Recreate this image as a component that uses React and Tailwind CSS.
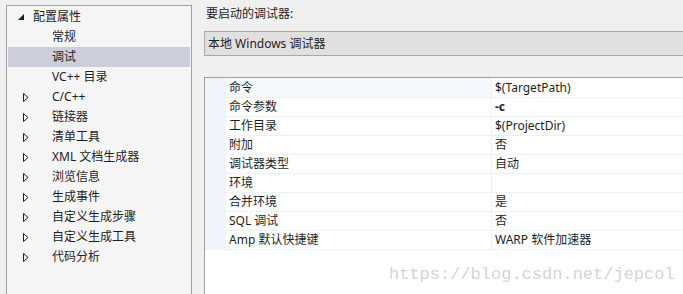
import React from 'react';

const treeItems = [
  { label: '常规' },
  { label: '调试', selected: true },
  { label: 'VC++ 目录' },
  { label: 'C/C++', arrow: true },
  { label: '链接器', arrow: true },
  { label: '清单工具', arrow: true },
  { label: 'XML 文档生成器', arrow: true },
  { label: '浏览信息', arrow: true },
  { label: '生成事件', arrow: true },
  { label: '自定义生成步骤', arrow: true },
  { label: '自定义生成工具', arrow: true },
  { label: '代码分析', arrow: true },
];

const props = [
  ['命令', '$(TargetPath)'],
  ['命令参数', '-c', true],
  ['工作目录', '$(ProjectDir)'],
  ['附加', '否'],
  ['调试器类型', '自动'],
  ['环境', ''],
  ['合并环境', '是'],
  ['SQL 调试', '否'],
  ['Amp 默认快捷键', 'WARP 软件加速器'],
];

const font = { fontFamily: '"Noto Sans", "Noto Sans CJK SC", sans-serif' };

const Collapsed = () => (
  <svg width="6" height="9" viewBox="0 0 6 9" className="mr-[9px]">
    <path d="M0.5 0.5 L5 4.5 L0.5 8.5 Z" fill="none" stroke="#1e1e1e" strokeWidth="1" />
  </svg>
);

const Expanded = () => (
  <svg width="6" height="6" viewBox="0 0 6 6" className="mr-[9px]">
    <path d="M6 0 L6 6 L0 6 Z" fill="#1e1e1e" />
  </svg>
);

export default function App() {
  return (
    <div
      className="w-[683px] h-[294px] overflow-hidden bg-[#f0f0f0] flex pt-[5px] pl-[6px] text-[12px] text-[#1e1e1e]"
      style={font}
    >
      {/* tree */}
      <div className="w-[186px] h-[300px] shrink-0 border border-[#a0a0a0] bg-[#f5f5f5] pt-[1px]">
        <div className="h-[20px] flex items-center pl-[11px]">
          <Expanded />
          <span>配置属性</span>
        </div>
        {treeItems.map((it) => (
          <div
            key={it.label}
            className={`h-[20px] flex items-center mx-[1px] ${it.selected ? 'bg-[#cccedb]' : ''}`}
          >
            <div className="w-[30px] shrink-0 flex justify-end">{it.arrow && <Collapsed />}</div>
            <span className="pl-[14px]">{it.label}</span>
          </div>
        ))}
      </div>

      {/* right side */}
      <div className="flex-1 pl-[12px] flex flex-col">
        <div className="h-[16px] flex items-center pl-[2px] mt-[1px]">要启动的调试器:</div>
        <div className="mt-[9px] h-[25px] border border-[#a8a8a8] bg-[#e0e0e0] flex items-center pl-[3px] w-[500px]">
          本地 Windows 调试器
        </div>
        <div className="mt-[21px] flex-1 border-l border-t border-[#a0a0a0] bg-white w-[500px] relative">
          {props.map(([name, value, bold], i) => (
            <div
              key={name}
              className={`flex border-b border-[#edf1f8] ${i === 0 ? 'h-[20px]' : 'h-[19px]'}`}
            >
              <div className="w-[21px] shrink-0 bg-[#f0f4fa] -mb-[1px]" />
              <div
                className={`w-[266px] shrink-0 flex items-center pl-[3px] border-r border-[#edf1f8] ${
                  i === 0 ? 'bg-[#f5f8fc]' : ''
                }`}
              >
                {name}
              </div>
              <div className={`flex items-center pl-[3px] ${bold ? 'font-bold' : ''}`}>{value}</div>
            </div>
          ))}
          <div
            className="absolute left-[184px] top-[184px] text-[17px] text-[#d4d4d4] whitespace-nowrap"
            style={{ fontFamily: '"Liberation Mono", monospace' }}
          >
            https://blog.csdn.net/jepcol
          </div>
        </div>
      </div>
    </div>
  );
}
